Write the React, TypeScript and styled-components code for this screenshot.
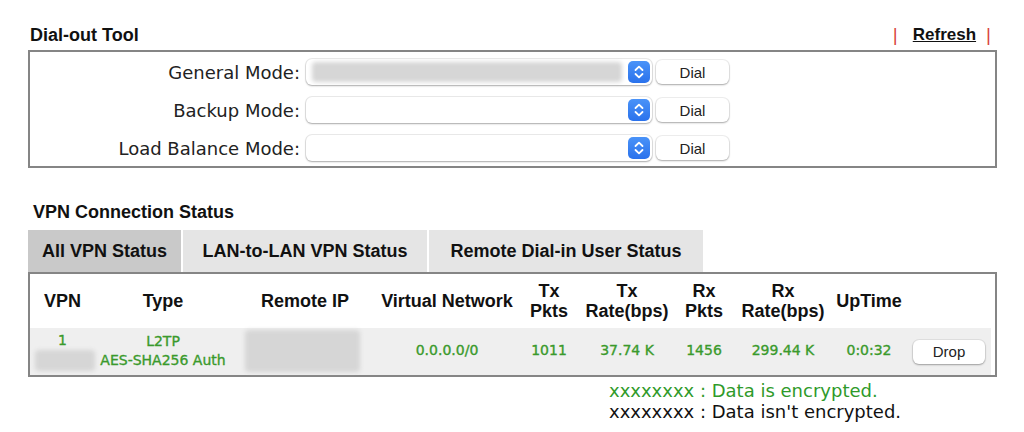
import React from "react";
import styled, { createGlobalStyle } from "styled-components";

const modes = [
  { label: "General Mode:", hidden: true },
  { label: "Backup Mode:", hidden: false },
  { label: "Load Balance Mode:", hidden: false },
];

const tabs = [
  { title: "All VPN Status", width: 153, active: true },
  { title: "LAN-to-LAN VPN Status", width: 244, active: false },
  { title: "Remote Dial-in User Status", width: 274, active: false },
];

const heads = [
  ["VPN"],
  ["Type"],
  ["Remote IP"],
  ["Virtual Network"],
  ["Tx", "Pkts"],
  ["Tx", "Rate(bps)"],
  ["Rx", "Pkts"],
  ["Rx", "Rate(bps)"],
  ["UpTime"],
  [],
];

const SelectArrow = () => (
  <ArrowBox>
    <svg width="22" height="22" viewBox="0 0 22 22">
      <path
        d="M7.5 9 L11 5.6 L14.5 9 M7.5 13 L11 16.4 L14.5 13"
        fill="none"
        stroke="#fff"
        strokeWidth="1.8"
        strokeLinecap="round"
        strokeLinejoin="round"
      />
    </svg>
  </ArrowBox>
);

const App = () => {
  return (
    <>
      <GlobalStyle />
      <Page>
        <SectionHead>
          <Title>Dial-out Tool</Title>
          <RefreshLinks>
            <Bar>|</Bar>
            <RefreshLink>Refresh</RefreshLink>
            <Bar>|</Bar>
          </RefreshLinks>
        </SectionHead>

        <DialBox>
          {modes.map((m) => (
            <ModeRow key={m.label}>
              <ModeLabel>{m.label}</ModeLabel>
              <Select>
                {m.hidden ? <Redacted w={310} h={20} /> : <span />}
                <SelectArrow />
              </Select>
              <Button w={73}>Dial</Button>
            </ModeRow>
          ))}
        </DialBox>

        <VpnTitle>VPN Connection Status</VpnTitle>
        <Tabs>
          {tabs.map((t) => (
            <Tab key={t.title} w={t.width} active={t.active}>
              {t.title}
            </Tab>
          ))}
        </Tabs>

        <StatusBox>
          <HeadRow>
            {heads.map((h, i) => (
              <HeadCell key={i}>
                {h.map((line) => (
                  <div key={line}>{line}</div>
                ))}
              </HeadCell>
            ))}
          </HeadRow>
          <DataRow>
            <Cell>
              <div>1</div>
              <Redacted w={60} h={21} style={{ marginLeft: 5 }} />
            </Cell>
            <Cell>
              <div>L2TP</div>
              <div>AES-SHA256 Auth</div>
            </Cell>
            <Cell>
              <Redacted w={115} h={42} style={{ marginLeft: 14 }} />
            </Cell>
            <Cell>0.0.0.0/0</Cell>
            <Cell>1011</Cell>
            <Cell>37.74 K</Cell>
            <Cell>1456</Cell>
            <Cell>299.44 K</Cell>
            <Cell>0:0:32</Cell>
            <DropCell>
              <Button w={72}>Drop</Button>
            </DropCell>
          </DataRow>
        </StatusBox>

        <Legend>
          <LegendLine encrypted>xxxxxxxx : Data is encrypted.</LegendLine>
          <LegendLine>xxxxxxxx : Data isn't encrypted.</LegendLine>
        </Legend>
      </Page>
    </>
  );
};

export default App;

const GlobalStyle = createGlobalStyle`
  body {
    margin: 0;
    background: #ffffff;
  }
`;

const Page = styled.div`
  width: 969px;
  padding: 25px 27px 0 28px;
  font-family: "Liberation Sans", Arial, sans-serif;
  color: #111;
`;

const SectionHead = styled.div`
  display: flex;
  justify-content: space-between;
  align-items: center;
  height: 20px;
  margin-bottom: 5px;
  padding-left: 2px;
  padding-right: 6px;
`;

const Title = styled.div`
  font-size: 18px;
  font-weight: 700;
  line-height: 20px;
`;

const RefreshLinks = styled.div`
  display: flex;
  align-items: center;
  font-size: 17px;
  line-height: 20px;
`;

const Bar = styled.span`
  color: #d9483f;
  font-weight: 400;
  font-size: 19px;
`;

const RefreshLink = styled.span`
  font-weight: 700;
  text-decoration: underline;
  margin: 0 10px 0 15px;
  cursor: pointer;
`;

const DialBox = styled.div`
  border: 2px solid #858585;
  height: 107px;
  padding-top: 7px;
  display: flex;
  flex-direction: column;
  gap: 12px;
`;

const ModeRow = styled.div`
  display: grid;
  grid-template-columns: 270px 352px 77px;
  align-items: center;
  height: 26px;
`;

const ModeLabel = styled.div`
  font-family: "DejaVu Sans", Verdana, sans-serif;
  font-size: 18px;
  color: #222;
  text-align: right;
`;

const Select = styled.div`
  margin-left: 6px;
  height: 26px;
  border-radius: 6px;
  background: #fff;
  box-shadow: 0 0 0 1px rgba(0, 0, 0, 0.08), 0 1px 2px rgba(0, 0, 0, 0.28);
  display: flex;
  align-items: center;
  justify-content: space-between;
  padding: 0 2px 0 6px;
`;

const ArrowBox = styled.div`
  width: 22px;
  height: 22px;
  border-radius: 5px;
  background: linear-gradient(#4a93f8, #2a72ec);
  display: flex;
`;

const Redacted = styled.span<{ w: number; h: number }>`
  display: block;
  width: ${({ w }) => w}px;
  height: ${({ h }) => h}px;
  background: #d6d6d6;
  border-radius: 4px;
  filter: blur(2px);
`;

const Button = styled.div<{ w: number }>`
  width: ${({ w }) => w}px;
  height: 24px;
  margin-left: 4px;
  border-radius: 6px;
  background: #fff;
  box-shadow: 0 0 0 1px rgba(0, 0, 0, 0.06), 0 1px 2px rgba(0, 0, 0, 0.3);
  display: flex;
  align-items: center;
  justify-content: center;
  font-family: "Liberation Sans", Arial, sans-serif;
  font-size: 15px;
  font-weight: 400;
  color: #222;
  cursor: pointer;
`;

const VpnTitle = styled(Title)`
  margin-top: 34px;
  padding-left: 5px;
`;

const Tabs = styled.div`
  display: flex;
  gap: 2px;
  margin-top: 8px;
`;

const Tab = styled.div<{ w: number; active: boolean }>`
  width: ${({ w }) => w}px;
  height: 42px;
  display: flex;
  align-items: center;
  justify-content: center;
  background: ${({ active }) => (active ? "#c9c9c9" : "#e5e5e5")};
  font-size: 18px;
  font-weight: 700;
  color: #111;
`;

const StatusBox = styled.div`
  border: 2px solid #858585;
`;

const columns = "65px 136px 148px 136px 68px 88px 66px 92px 80px 82px";

const HeadRow = styled.div`
  display: grid;
  grid-template-columns: ${columns};
  align-items: center;
  height: 54px;
`;

const HeadCell = styled.div`
  text-align: center;
  font-size: 18px;
  font-weight: 700;
  line-height: 20px;
`;

const DataRow = styled.div`
  display: grid;
  grid-template-columns: ${columns};
  align-items: center;
  height: 47px;
  width: 961px;
  background: #efefef;
`;

const Cell = styled.div`
  text-align: center;
  font-family: "DejaVu Sans", Verdana, sans-serif;
  font-size: 14px;
  font-weight: 400;
  -webkit-text-stroke: 0.35px #3a9a2c;
  line-height: 19px;
  color: #3a9a2c;
  margin-top: -2px;
`;

const DropCell = styled.div`
  display: flex;
`;

const Legend = styled.div`
  margin-top: 3px;
  padding-left: 581px;
  font-family: "DejaVu Sans", Verdana, sans-serif;
  font-size: 18px;
  line-height: 21px;
`;

const LegendLine = styled.div<{ encrypted?: boolean }>`
  color: ${({ encrypted }) => (encrypted ? "#2f9a2a" : "#111")};
`;
